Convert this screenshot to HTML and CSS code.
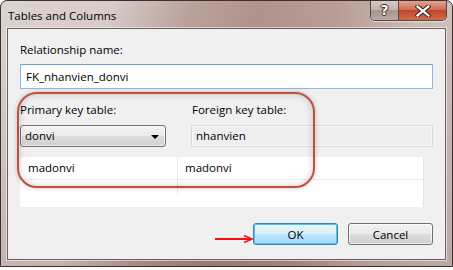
FILE: index.html
```html
<!DOCTYPE html>
<html>
<head>
    <link rel="stylesheet" href="styles.css">
    <title>Tables and Columns</title>
</head>
<body>
    <div class="window">
        <div class="titlebar">
            <span class="title">Tables and Columns</span>
            <div class="caption">
                <span class="cap-help">?</span>
                <span class="cap-close">
                    <svg width="16" height="12" viewBox="0 0 16 12">
                        <path d="M2.5 1.5 L13.5 10.5 M13.5 1.5 L2.5 10.5" stroke="#3a2a28" stroke-width="4.2" stroke-linecap="square"/>
                        <path d="M2.5 1.5 L13.5 10.5 M13.5 1.5 L2.5 10.5" stroke="#ffffff" stroke-width="2.2" stroke-linecap="square"/>
                    </svg>
                </span>
            </div>
        </div>

        <div class="client">
            <div class="label">Relationship name:</div>
            <div class="textbox">FK_nhanvien_donvi</div>

            <div class="keys">
                <div class="key-primary">
                    <div class="label">Primary key table:</div>
                    <div class="combo">donvi<span class="combo-arrow"></span></div>
                </div>
                <div class="key-foreign">
                    <div class="label">Foreign key table:</div>
                    <div class="readonly">nhanvien</div>
                </div>
            </div>

            <div class="grid">
                <div class="grid-row">
                    <div class="cell first">madonvi</div>
                    <div class="cell">madonvi</div>
                </div>
                <div class="grid-row empty">
                    <div class="cell first"></div>
                    <div class="cell"></div>
                </div>
            </div>

            <div class="buttons">
                <button class="btn btn-ok">OK</button>
                <button class="btn">Cancel</button>
            </div>

            <div class="highlight"></div>
            <svg class="pointer" width="40" height="10" viewBox="0 0 40 10">
                <path d="M0 5 L36 5" stroke="#ff1010" stroke-width="2"/>
                <path d="M29 1.5 L37 5 L29 8.5" fill="none" stroke="#ff1010" stroke-width="1.6"/>
            </svg>
        </div>
    </div>
</body>
</html>
```

FILE: styles.css
```css
body {
    margin: 0;
    background-color: #ffffff;
    font-family: 'Open Sans', 'Noto Sans', sans-serif;
    font-size: 11.5px;
    color: #000000;
}
.window {
    width: 453px;
    height: 267px;
    box-sizing: border-box;
    padding: 0 6px 6px 6px;
    border: 1px solid #3e302c;
    border-radius: 7px 7px 0 0;
    background:
        linear-gradient(to bottom, rgba(255, 255, 255, 0.12), rgba(60, 30, 20, 0.12)),
        linear-gradient(100deg, #d9cecb 0%, #d3c6c2 22%, #b29790 38%, #a6857c 52%, #b09189 68%, #c7b3ad 84%, #cdbcb7 100%);
}
.titlebar {
    height: 27px;
    display: flex;
    justify-content: space-between;
    align-items: flex-start;
}
.title {
    padding: 7px 0 0 1px;
    font-size: 11.5px;
    line-height: 15px;
    color: #000000;
}
.caption {
    display: flex;
    margin-right: -1px;
    border: 1px solid #5a4640;
    border-top: none;
    border-radius: 0 0 5px 5px;
    overflow: hidden;
    box-shadow: 0 1px 0 rgba(255, 255, 255, 0.5);
}
.cap-help {
    width: 27px;
    height: 19px;
    text-align: center;
    font-family: 'DejaVu Sans', sans-serif;
    font-weight: bold;
    font-size: 14px;
    line-height: 19px;
    color: #ffffff;
    text-shadow: 1px 0 0 #3a2a28, -1px 0 0 #3a2a28, 0 1px 0 #3a2a28, 0 -1px 0 #3a2a28;
    background: linear-gradient(to bottom, #d6cac6 0%, #c3b2ad 45%, #a89590 50%, #b9a8a3 100%);
    border-right: 1px solid #5a4640;
}
.cap-close {
    width: 47px;
    height: 19px;
    display: flex;
    align-items: center;
    justify-content: center;
    background: linear-gradient(to bottom, #e0a493 0%, #cf6e56 45%, #c0462a 50%, #d26a4c 100%);
}
.client {
    position: relative;
    padding: 13px 12px 14px 12px;
    background-color: #f0f0f0;
    border: 1px solid #6d605c;
    box-shadow: 0 0 0 1px rgba(255, 255, 255, 0.55);
}
.label {
    line-height: 15px;
    height: 15px;
}
.textbox {
    margin-top: 7px;
    height: 23px;
    line-height: 23px;
    padding-left: 5px;
    background-color: #ffffff;
    border: 1px solid #8fb6e6;
    border-top-color: #6d9bd6;
}
.keys {
    display: flex;
    margin-top: 13px;
}
.key-primary {
    width: 146px;
}
.key-foreign {
    flex: 1;
    margin-left: 25px;
}
.key-foreign .label {
    padding-left: 1px;
}
.combo, .readonly {
    margin-top: 8px;
    height: 20px;
    line-height: 20px;
    padding-left: 4px;
}
.combo {
    position: relative;
    border: 1px solid #707070;
    border-radius: 3px;
    background: linear-gradient(to bottom, #f4f4f4 0%, #ebebeb 48%, #dddddd 52%, #d0d0d0 100%);
    box-shadow: inset 0 0 0 1px rgba(255, 255, 255, 0.6);
}
.combo-arrow {
    position: absolute;
    right: 6px;
    top: 9px;
    border-left: 4px solid transparent;
    border-right: 4px solid transparent;
    border-top: 4px solid #000000;
}
.readonly {
    border: 1px solid #d9d9d9;
    background-color: #eeeeee;
    box-shadow: inset 0 0 0 1px #f8f8f8;
}
.grid {
    margin-top: 10px;
    width: 403px;
    height: 50px;
    background-color: #ffffff;
    border-right: 1px solid #e4e4e4;
}
.grid-row {
    display: flex;
    height: 22px;
    line-height: 22px;
    border-bottom: 1px solid #ececec;
}
.grid-row.empty {
    height: 15px;
    border-bottom: none;
}
.cell {
    flex: 1;
    padding-left: 7px;
}
.cell.first {
    flex: none;
    width: 149px;
    padding-left: 8px;
    border-right: 1px solid #e8e8e8;
}
.buttons {
    display: flex;
    justify-content: flex-end;
    gap: 10px;
    margin-top: 16px;
}
.btn {
    width: 85px;
    height: 22px;
    padding: 0;
    font-family: inherit;
    font-size: 11.5px;
    color: #000000;
    border: 1px solid #707070;
    border-radius: 3px;
    background: linear-gradient(to bottom, #f2f2f2 0%, #ebebeb 48%, #dddddd 52%, #cfcfcf 100%);
    box-shadow: inset 0 0 0 1px rgba(255, 255, 255, 0.7);
}
.btn-ok {
    border-color: #3c7fb1;
    background: linear-gradient(to bottom, #eaf6fd 0%, #d9f0fc 48%, #bee6fd 52%, #a7d9f5 100%);
    box-shadow: inset 0 0 0 1px #48c6f5;
}
.highlight {
    position: absolute;
    left: 9px;
    top: 63px;
    width: 294px;
    height: 92px;
    border: 2px solid #c1503b;
    border-radius: 20px;
    box-shadow: 0 0 5px rgba(0, 0, 0, 0.22), inset 0 0 7px rgba(0, 0, 0, 0.2);
}
.pointer {
    position: absolute;
    left: 207px;
    top: 205px;
}
```
